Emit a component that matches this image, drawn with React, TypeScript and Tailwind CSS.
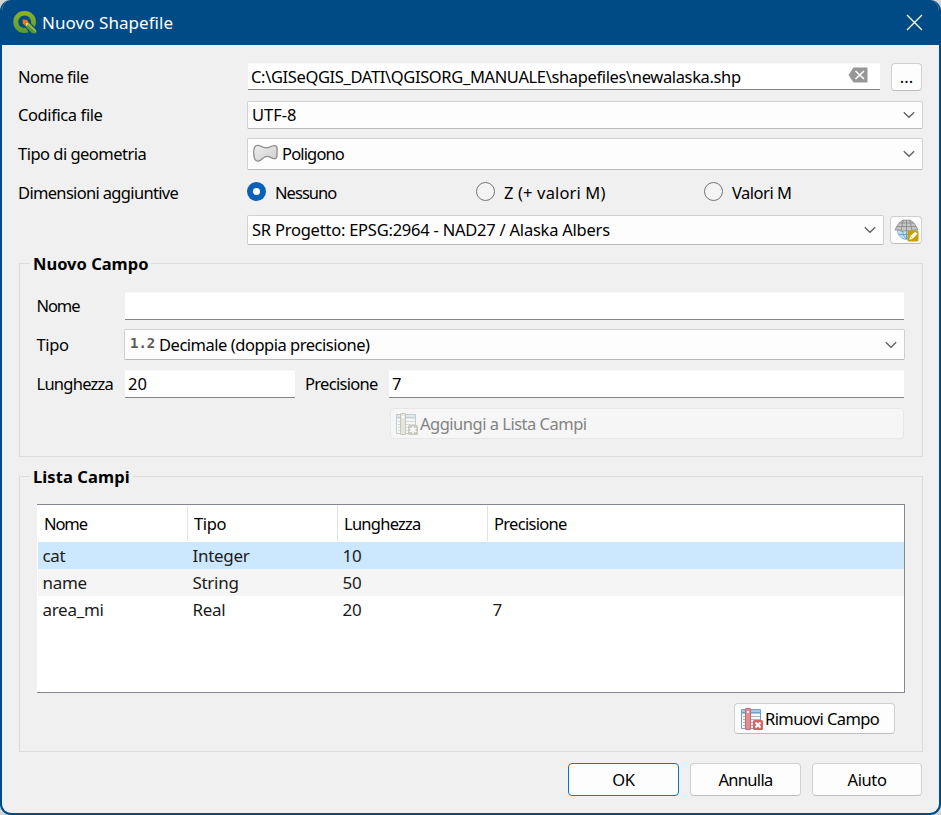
import type { ReactNode } from "react";

function Chevron({ className = "" }: { className?: string }) {
  return (
    <svg className={"shrink-0 " + className} width="12" height="8" viewBox="0 0 12 8" fill="none" stroke="#5c5c5c" strokeWidth="1.2">
      <path d="M0.8 1.2 6 6.3 11.2 1.2" />
    </svg>
  );
}

function Combo({ className, children }: { className: string; children: ReactNode }) {
  return (
    <div className={"flex shrink-0 items-center rounded-[2px] border border-[#d0d0d0] border-b-[#b9b9b9] bg-[#fdfdfd] pl-[4px] pr-[7px] " + className}>
      {children}
      <Chevron className="ml-auto" />
    </div>
  );
}

function LineInput({ className, children }: { className: string; children?: ReactNode }) {
  return <div className={"flex items-center border-b border-b-[#858585] border-t border-t-[#f8f8f8] bg-white " + className}>{children}</div>;
}

function Radio({ label, checked = false, className, text }: { label: string; checked?: boolean; className: string; text: string }) {
  return (
    <div className={"flex items-center " + className}>
      {checked ? (
        <span className="mb-[3px] flex size-[19px] items-center justify-center rounded-full bg-[#0860b8]">
          <span className="size-[7px] rounded-full bg-white" />
        </span>
      ) : (
        <span className="mb-[3px] size-[19px] rounded-full border border-[#757575] bg-[#f4f4f4]" />
      )}
      <span className={"ml-[9px] whitespace-nowrap " + text}>{label}</span>
    </div>
  );
}

function Logo() {
  return (
    <svg width="24" height="24" viewBox="0 0 24 24" className="mb-[2px] shrink-0">
      <defs>
        <linearGradient id="q" x1="0" y1="0" x2="0" y2="1">
          <stop offset="0" stopColor="#8eb229" />
          <stop offset="1" stopColor="#579a35" />
        </linearGradient>
      </defs>
      <path fill="url(#q)" fillRule="evenodd" d="M11.500 1C5.100 1 .3 5.700.3 12s4.800 11 11.300 11c1.600 0 3-.2 4.200-.8L12.800 18C8.600 18.300 5.300 16 5.300 12c0-3.700 2.600-6.600 6.300-6.600s6.500 2.900 6.500 6.600v1.400l3.700 3.500c.8-1.500 1.200-3.200 1.200-4.900C23 5.700 18.200 1 11.500 1Z" />
      <path fill="#589632" d="m12.500 13 3.400-.2 7.300 7.300v3.100h-4.200L12.500 16.700Z" />
      <path fill="#93b85a" d="m14.300 14.800 1.500-1.500 7.400 7.200v2Z" />
      <path fill="#f0e66a" d="m12.300 12.500 3.300.2-1.600 3-1.200-.2Z" />
      <path fill="#ee7913" d="m9.600 9.600 4.500.3 1.600 2.900-3 .2v3l-2.900-2.200Z" />
    </svg>
  );
}

function PolygonIcon() {
  return (
    <svg width="25" height="19" viewBox="0 0 25 19" className="mb-[2px] ml-px shrink-0">
      <defs>
        <linearGradient id="p" x1="0" y1="0" x2="1" y2="1">
          <stop offset="0" stopColor="#f1f1f1" />
          <stop offset="1" stopColor="#cccccc" />
        </linearGradient>
      </defs>
      <path fill="url(#p)" stroke="#8b8d8a" strokeWidth="1.3" d="M1.800 3C3 .9 5.500 1.200 7.500 2c3.500 2.200 6 2.400 9 1.100 2.500-1.300 6-1.900 7.100-.4 1 1.500.4 3.500.4 6s.5 4-.7 5.200c-1.500 1.300-4 .5-6-.7-2.300-1.200-4-1.200-6 .1-2.300 1.400-4 4-6.500 3.800-2-.2-3.100-1.700-3.600-4C.6 10 .8 5 1.800 3Z" />
    </svg>
  );
}

function GlobeIcon() {
  return (
    <svg width="25" height="24" viewBox="0 0 25 24" className="shrink-0">
      <path fill="#c2e1f7" stroke="#7db3dc" d="M3.500 12c0 5 4 9.300 9 9.300s9-4.300 9-9.300Z" />
      <path fill="none" stroke="#5c9bce" strokeWidth=".9" d="M8.500 12c.2 4 1.500 7.500 4 9M16.500 12c-.2 4-1.500 7-4 9M12.500 12v9M5 16.500h15" />
      <path fill="#c6c6c6" stroke="#8c8c8c" strokeWidth=".9" strokeLinejoin="round" d="M9 2.200h7l3.500 2.300L22 8l2 4-3.500-.3-3 1.600-5-.6-5 .6-3-1.600-3.500.3L3 8l2.500-3.500Z" />
      <path fill="none" stroke="#8c8c8c" strokeWidth=".9" d="M5.500 5h14M3 8.500h19M9.800 2.200 8.500 5l-1.500 8M15.200 2.200 16.500 5l1.500 8M12.500 2.200v10.500" />
      <rect x="13.500" y="12.500" width="11" height="11" rx="1.500" fill="#c7a000" />
      <path fill="#fff" d="m15.300 21.700 1-3.700 5-4.200 2.200 2-4.700 5Z" />
      <path stroke="#c7a000" strokeWidth=".8" d="m16.200 18 2.500 2.600" />
    </svg>
  );
}

function FieldIcon({ remove = false }: { remove?: boolean }) {
  const line = remove ? "#6f9fc9" : "#c4cbd1";
  const head = remove ? "#a9cbea" : "#e2e7ec";
  const column = remove ? "#e08e8e" : "#e5e5dd";
  const edge = remove ? "#cf6667" : "#c6c6bc";
  const rule = remove ? "#a9b4bd" : "#d5d9dc";
  return (
    <svg width="24" height="24" viewBox="0 0 24 24" className="shrink-0">
      <path fill="#f6f7f7" stroke={line} d="M.5 2.500h19v19H.5Z" />
      <path fill={head} d="M1 3h18v4H1Z" />
      <path stroke={line} d="M1 5.500h18" />
      <path stroke={rule} d="M2 9.500h17M2 12.500h17M2 15.500h17M2 18.500h17" />
      <rect x="4.500" y="1.500" width="5" height="21" rx=".5" fill={column} stroke={edge} />
      <path d="M6 4h2v2H6Z" fill="#fff" />
      <rect x="12" y="13" width="10" height="10" rx="1.500" fill={remove ? "#d66264" : "#c9c9bd"} />
      {remove ? (
        <path stroke="#fff" strokeWidth="2.200" d="m14.500 15.500 5 5m0-5-5 5" />
      ) : (
        <path stroke="#fff" strokeWidth="1.500" d="M17 14.200v7.600M13.700 16.100l6.600 3.800m0-3.800-6.600 3.800" />
      )}
    </svg>
  );
}

const button = "flex items-center whitespace-nowrap rounded-[4px] border border-[#d0d0d0] border-b-[#bdbdbd] bg-[#fdfdfd]";

const fields = [
  { name: "cat", type: "Integer", length: "10", precision: "", row: "bg-[#cce8ff]" },
  { name: "name", type: "String", length: "50", precision: "", row: "bg-[#f5f5f5]" },
  { name: "area_mi", type: "Real", length: "20", precision: "7", row: "bg-white" },
];

export default function App() {
  return (
    <div className="h-[815px] w-[941px] bg-[#d5d5d5] font-['Noto_Sans',sans-serif] text-[16.5px] leading-[20px] text-black">
      <div className="flex h-full flex-col overflow-hidden rounded-[11px] border-2 border-t-0 border-[#004b85] bg-[#f0f0f0]">
        <header className="flex h-[45px] shrink-0 items-center bg-[#004b85] pl-[11px] pr-[16px] text-white">
          <Logo />
          <span className="ml-[5px] text-[17px] tracking-[0.05px]">Nuovo Shapefile</span>
          <svg className="ml-auto" width="17" height="17" viewBox="0 0 17 17" stroke="#fff" strokeWidth="1.300">
            <path d="m1 1 15 15M16 1 1 16" />
          </svg>
        </header>

        <main className="flex grow flex-col pl-[16px] pr-[16px] pt-[18px]">
          <div className="flex h-[28px] items-center">
            <span className="w-[230px] tracking-[-0.5px]">Nome file</span>
            <LineInput className="mb-px h-[27px] w-[632px] pl-[3px] pr-[12px]">
              <span className="mt-px whitespace-nowrap tracking-[-0.36px]">C:\GISeQGIS_DATI\QGISORG_MANUALE\shapefiles\newalaska.shp</span>
              <svg className="mb-[3px] ml-auto shrink-0" width="20" height="16" viewBox="0 0 20 16">
                <path fill="#979797" d="M5.500.5H19.500v15H5.500L.5 8Z" />
                <path stroke="#fff" strokeWidth="1.600" d="m7.500 4 8.500 8m0-8-8.500 8" />
              </svg>
            </LineInput>
            <div className={button + " ml-[11px] h-[28px] w-[31px] justify-center"}>...</div>
          </div>

          <div className="mt-[10px] flex h-[28px] items-center">
            <span className="w-[229px] tracking-[-0.4px]">Codifica file</span>
            <Combo className="h-[28px] w-[676px]">
              <span>UTF-8</span>
            </Combo>
          </div>

          <div className="mt-[9px] flex h-[32px] items-center">
            <span className="w-[229px] tracking-[-0.52px]">Tipo di geometria</span>
            <Combo className="h-[32px] w-[676px]">
              <PolygonIcon />
              <span className="ml-[4px] tracking-[-0.85px]">Poligono</span>
            </Combo>
          </div>

          <div className="mt-[11px] flex h-[24px] items-center">
            <span className="w-[229px] tracking-[-0.67px]">Dimensioni aggiuntive</span>
            <Radio label="Nessuno" checked className="w-[229px]" text="tracking-[-0.95px]" />
            <Radio label="Z (+ valori M)" className="w-[228px]" text="tracking-[0.14px]" />
            <Radio label="Valori M" className="" text="tracking-[-0.5px]" />
          </div>

          <div className="mt-[10px] flex h-[30px] items-center pl-[229px]">
            <Combo className="h-[30px] w-[637px]">
              <span className="tracking-[-0.23px]">SR Progetto: EPSG:2964 - NAD27 / Alaska Albers</span>
            </Combo>
            <div className={button + " ml-[6px] h-[28px] w-[32px] justify-center"}>
              <GlobeIcon />
            </div>
          </div>

          <section className="ml-px mt-[18px] flex h-[194px] w-[904px] shrink-0 flex-col border border-[#dcdcdc] pl-[16px]">
            <h2 className="-ml-[6px] -mt-[10px] h-[20px] self-start bg-[#f0f0f0] px-[3px] font-bold">Nuovo Campo</h2>
            <div className="mt-[18px] flex h-[28px] items-center">
              <span className="w-[89px] pl-[0.5px] tracking-[-1.1px]">Nome</span>
              <LineInput className="h-[28px] w-[779px]" />
            </div>
            <div className="mt-[9px] flex h-[31px] items-center">
              <span className="w-[88px] pl-[0.5px] tracking-[-0.4px]">Tipo</span>
              <Combo className="h-[31px] w-[781px]">
                <span className="mb-[3px] ml-px w-[30px] font-['DejaVu_Sans_Mono',monospace] text-[14px] font-bold text-[#5c5c5c]">1.2</span>
                <span className="-ml-px tracking-[-0.48px]">Decimale (doppia precisione)</span>
              </Combo>
            </div>
            <div className="mt-[10px] flex h-[28px] items-center">
              <span className="w-[89px] pl-[0.5px] tracking-[-0.75px]">Lunghezza</span>
              <LineInput className="h-[28px] w-[170px] pl-[3px]">20</LineInput>
              <span className="ml-[10px] w-[84px] tracking-[-0.7px]">Precisione</span>
              <LineInput className="h-[28px] w-[515px] pl-[3px]">7</LineInput>
            </div>
            <div className="ml-[354px] mt-[10px] flex h-[31px] w-[514px] items-center rounded-[4px] border border-[#e7e7e7] bg-[#f6f6f6] pl-[5px] text-[#838383]">
              <FieldIcon />
              <span className="tracking-[-0.5px]">Aggiungi a Lista Campi</span>
            </div>
          </section>

          <section className="ml-px mt-[19px] flex h-[276px] w-[904px] shrink-0 flex-col border border-[#dcdcdc] pl-[17px]">
            <h2 className="-ml-[7px] -mt-[10px] h-[20px] self-start bg-[#f0f0f0] px-[3px] font-bold tracking-[0.1px]">Lista Campi</h2>
            <div className="mt-[17px] h-[189px] w-[868px] border border-l-0 border-[#828790] bg-white">
              <div className="grid h-[37px] grid-cols-[151px_150px_150px_1fr] items-center">
                <span className="flex h-[35px] items-center border-r border-[#e3e3e3] pl-[7px] tracking-[-1.1px]">Nome</span>
                <span className="flex h-[35px] items-center border-r border-[#e3e3e3] pl-[6px] tracking-[-0.4px]">Tipo</span>
                <span className="flex h-[35px] items-center border-r border-[#e3e3e3] pl-[6px] tracking-[-0.75px]">Lunghezza</span>
                <span className="flex h-[35px] items-center pl-[6px] tracking-[-0.7px]">Precisione</span>
              </div>
              {fields.map((f) => (
                <div key={f.name} className={"ml-px grid h-[27px] grid-cols-[150px_150px_150px_1fr] items-center pl-[4.5px] text-[17px] tracking-[-0.3px] text-[#1b1b1b] " + f.row}>
                  <span>{f.name}</span>
                  <span>{f.type}</span>
                  <span>{f.length}</span>
                  <span>{f.precision}</span>
                </div>
              ))}
            </div>
            <div className={button + " ml-[697px] mt-[10px] h-[31px] w-[161px] pl-[6px]"}>
              <FieldIcon remove />
              <span className="tracking-[-0.6px]">Rimuovi Campo</span>
            </div>
          </section>

          <footer className="mt-[11px] flex h-[33px] gap-[11px] pl-[550px]">
            <div className="flex w-[111px] items-center justify-center rounded-[4px] border border-[#0078d4] bg-[#fdfdfd] tracking-[-0.3px]">OK</div>
            <div className={button + " w-[111px] justify-center tracking-[-0.7px]"}>Annulla</div>
            <div className={button + " w-[110px] justify-center tracking-[-0.4px]"}>Aiuto</div>
          </footer>
        </main>
      </div>
    </div>
  );
}
